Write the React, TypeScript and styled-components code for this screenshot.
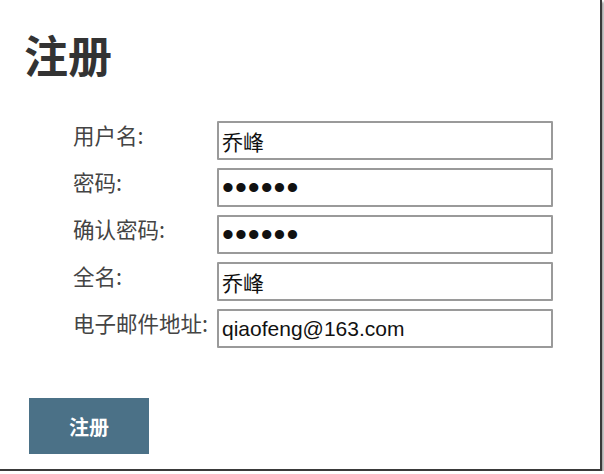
import React from "react";
import styled, { createGlobalStyle } from "styled-components";

const Global = createGlobalStyle`
  html, body { margin: 0; padding: 0; background: #ffffff; }
  body { font-family: "Noto Sans CJK SC", "Liberation Sans", sans-serif; }
`;

const Frame = styled.div`
  box-sizing: border-box;
  width: 602px;
  height: 471px;
  background: #ffffff;
  border-right: 2px solid #3a3a3a;
  border-bottom: 2px solid #3a3a3a;
  box-shadow: 2px 2px 2px rgba(0, 0, 0, 0.35);
  padding: 32px 0 0 24px;
`;

const Title = styled.h1`
  margin: 0;
  font-family: "Noto Sans CJK SC", sans-serif;
  font-size: 44px;
  line-height: 44px;
  font-weight: 700;
  color: #333333;
`;

const Form = styled.form`
  display: grid;
  grid-template-columns: 144px 336px;
  grid-auto-rows: 39px;
  row-gap: 8px;
  margin: 45px 0 0 49px;
`;

const Label = styled.label`
  font-family: "Noto Sans CJK SC", sans-serif;
  font-size: 21.5px;
  line-height: 21px;
  padding-top: 3px;
  color: #444444;
  white-space: nowrap;
`;

const Field = styled.input<{ $secret?: boolean }>`
  box-sizing: border-box;
  width: 336px;
  height: 39px;
  margin: 0;
  border: 2px solid #9a9a9a;
  border-radius: 1px;
  padding: 0 0 0 3px;
  font-family: "Liberation Sans", "Noto Sans CJK SC", sans-serif;
  font-size: ${(p) => (p.$secret ? "34px" : "21px")};
  letter-spacing: ${(p) => (p.$secret ? "1px" : "0")};
  color: #111111;
  background: #ffffff;
  outline: none;
`;

const Submit = styled.button`
  display: block;
  margin: 50px 0 0 5px;
  width: 120px;
  height: 56px;
  border: none;
  background: #4b7187;
  color: #ffffff;
  font-family: "Noto Sans CJK SC", sans-serif;
  font-size: 20px;
  font-weight: 700;
  cursor: pointer;
`;

const rows: { label: string; value: string; secret?: boolean }[] = [
  { label: "用户名:", value: "乔峰" },
  { label: "密码:", value: "123456", secret: true },
  { label: "确认密码:", value: "123456", secret: true },
  { label: "全名:", value: "乔峰" },
  { label: "电子邮件地址:", value: "qiaofeng@163.com" },
];

export default function App() {
  return (
    <>
      <Global />
      <Frame>
        <Title>注册</Title>
        <Form onSubmit={(e) => e.preventDefault()}>
          {rows.map((r, i) => (
            <React.Fragment key={i}>
              <Label htmlFor={`f${i}`}>{r.label}</Label>
              <Field
                id={`f${i}`}
                type={r.secret ? "password" : "text"}
                $secret={r.secret}
                defaultValue={r.value}
                readOnly
              />
            </React.Fragment>
          ))}
        </Form>
        <Submit type="button">注册</Submit>
      </Frame>
    </>
  );
}
